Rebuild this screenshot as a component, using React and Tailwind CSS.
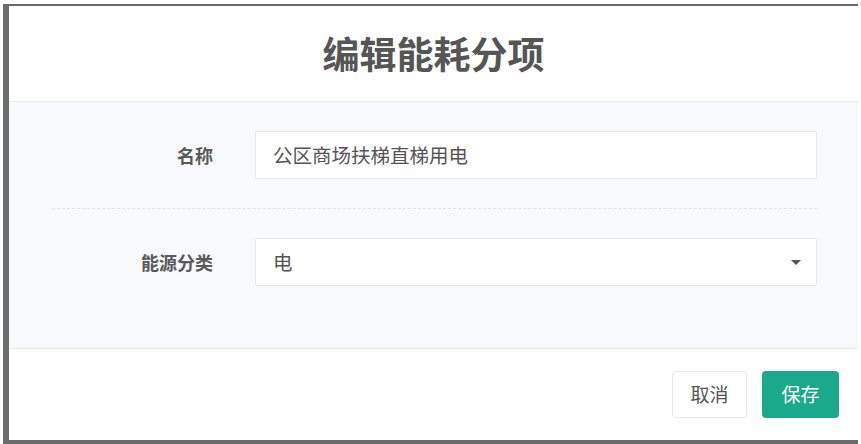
import React from "react";

const font = { fontFamily: '"Noto Sans CJK SC", "Noto Sans", sans-serif' };

function Row({ label, children }) {
  return (
    <div className="flex items-center">
      <div className="w-[161px] shrink-0 text-right text-[18px] font-bold text-[#5a5a5a]">{label}</div>
      <div className="ml-[42px] flex-1">{children}</div>
    </div>
  );
}

export default function App() {
  return (
    <div className="w-[861px] h-[444px] bg-white pl-[3px] pt-[4px] pr-[3px] overflow-hidden" style={font}>
      <div className="h-[440px] flex flex-col border-l-[6px] border-t-2 border-b-[4px] border-[#6b6b6b] bg-white">
        {/* header */}
        <div className="h-[96px] shrink-0 flex items-center justify-center border-b border-[#e7eaec]">
          <h1 className="text-[37px] font-bold text-[#555] leading-none">编辑能耗分项</h1>
        </div>

        {/* body */}
        <div className="h-[247px] shrink-0 bg-[#f8f9fa] border-b border-[#e7eaec] pl-[43px] pr-[41px] pt-[29px]">
          <Row label="名称">
            <div className="h-[48px] bg-white border border-[#e5e6e7] rounded-[2px] flex items-center pl-[17px] text-[19.5px] text-[#555]">
              公区商场扶梯直梯用电
            </div>
          </Row>

          <div className="my-[29px] border-t border-dashed border-[#e2e2e2]"></div>

          <Row label="能源分类">
            <div className="h-[48px] bg-white border border-[#e5e6e7] rounded-[2px] flex items-center justify-between pl-[17px] pr-[15px] text-[19.5px] text-[#555]">
              <span>电</span>
              <svg width="10" height="5" viewBox="0 0 10 5">
                <path d="M0 0 L10 0 L5 5 Z" fill="#555" />
              </svg>
            </div>
          </Row>
        </div>

        {/* footer */}
        <div className="flex-1 flex justify-end items-start pt-[22px] pr-[19px] gap-[15px]">
          <button className="w-[75px] h-[47px] bg-white border border-[#e7eaec] rounded-[4px] text-[19px] text-[#555]">
            取消
          </button>
          <button className="w-[77px] h-[47px] bg-[#1ba98b] rounded-[4px] text-[19px] text-white">
            保存
          </button>
        </div>
      </div>
    </div>
  );
}
